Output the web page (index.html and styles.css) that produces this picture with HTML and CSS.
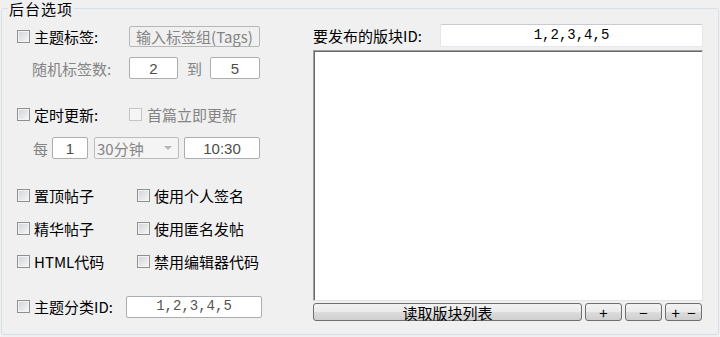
FILE: index.html
```html
<!DOCTYPE html>
<html lang="zh-CN">

<head>
  <meta charset="UTF-8">
  <title>后台选项</title>
  <link rel="stylesheet" href="styles.css">
</head>

<body>
  <fieldset class="group">
    <legend>后台选项</legend>
    <div class="cols">
      <div class="left">
        <div class="row r1">
          <label class="check lead"><span class="cb"></span>主题标签:</label>
          <div class="box off w-tags">输入标签组(Tags)</div>
        </div>
        <div class="row r2">
          <span class="lead muted indent">随机标签数:</span>
          <div class="box num w-small">2</div>
          <span class="muted to">到</span>
          <div class="box num w-small2">5</div>
        </div>

        <div class="row r3">
          <label class="check lead"><span class="cb"></span>定时更新:</label>
          <label class="check muted"><span class="cb off"></span>首篇立即更新</label>
        </div>
        <div class="row r4">
          <span class="muted every">每</span>
          <div class="box num w-one">1</div>
          <div class="select">30分钟<span class="arrow"></span></div>
          <div class="box num w-time">10:30</div>
        </div>

        <div class="opts">
          <label class="check"><span class="cb"></span>置顶帖子</label>
          <label class="check"><span class="cb"></span>使用个人签名</label>
          <label class="check"><span class="cb"></span>精华帖子</label>
          <label class="check"><span class="cb"></span>使用匿名发帖</label>
          <label class="check"><span class="cb"></span>HTML代码</label>
          <label class="check"><span class="cb"></span>禁用编辑器代码</label>
        </div>

        <div class="row r8">
          <label class="check"><span class="cb"></span>主题分类ID:</label>
          <div class="box ids w-cat">1,2,3,4,5</div>
        </div>
      </div>

      <div class="right">
        <div class="head">
          <span>要发布的版块ID:</span>
          <div class="field ids">1,2,3,4,5</div>
        </div>
        <div class="list"></div>
        <div class="buttons">
          <button class="btn wide">读取版块列表</button>
          <button class="btn">+</button>
          <button class="btn">−</button>
          <button class="btn pair">+ −</button>
        </div>
      </div>
    </div>
  </fieldset>
</body>

</html>
```

FILE: styles.css
```css
* {
  margin: 0;
  padding: 0;
  box-sizing: border-box;
}

body {
  width: 720px;
  height: 337px;
  overflow: hidden;
  background: #f0f0f0;
  font-family: "Noto Sans CJK SC", sans-serif;
  font-size: 15px;
  color: #000;
}

.group {
  margin: 0 1px;
  height: 335px;
  border: 1px solid #d5dfe5;
  border-radius: 3px;
  padding: 0 14px 14px 15px;
}

.group legend {
  margin-left: -9px;
  padding: 0 1px;
  font-size: 15px;
  line-height: 17px;
  letter-spacing: 1px;
  color: #000;
}

.cols {
  display: flex;
  gap: 51px;
  padding-top: 7px;
}

/* left column */
.left {
  width: 245px;
  padding-top: 1px;
}

.row {
  display: flex;
  align-items: center;
  height: 22px;
  line-height: 15px;
}

.r2 { margin-top: 10px; }
.r3 { margin-top: 24px; }
.r4 { margin-top: 12px; }
.r8 { margin-top: 23px; height: 23px; }

.lead {
  width: 112px;
  flex-shrink: 0;
}

.indent {
  padding-left: 15px;
}

.muted {
  color: #848484;
}

.check {
  display: flex;
  align-items: center;
  gap: 4px;
  line-height: 15px;
  white-space: nowrap;
}

.cb {
  width: 13px;
  height: 13px;
  flex-shrink: 0;
  border: 1px solid #8e8f8f;
  background: linear-gradient(135deg, #cfd2d6, #f8f8f8);
  box-shadow: inset 0 0 0 1px #f4f4f4;
}

.cb.off {
  border-color: #c5c5c5;
  background: #f5f5f5;
  box-shadow: none;
}

.box {
  height: 22px;
  border: 1px solid #abadb3;
  border-radius: 2px;
  background: #fff;
  display: flex;
  align-items: center;
  justify-content: center;
  white-space: nowrap;
}

.box.off {
  height: 21px;
  background: #f0f0f0;
  border-color: #b7b7b7;
  color: #848484;
}

.num {
  font-family: "Liberation Sans", sans-serif;
  color: #4d4d4d;
}

.ids {
  font-family: "Liberation Mono", monospace;
  font-size: 14px;
}

.w-tags { width: 131px; }
.w-small { width: 49px; }
.w-small2 { width: 50px; }
.to { margin: 0 8px 0 9px; }

.r3 .check.muted .cb { margin-right: 1px; }

.every {
  width: 35px;
  padding-left: 16px;
  flex-shrink: 0;
}

.w-one { width: 36px; }
.w-time { width: 76px; margin-left: 5px; }

.select {
  width: 85px;
  height: 22px;
  margin-left: 6px;
  padding-left: 2px;
  border: 1px solid #bcbcbc;
  border-radius: 2px;
  background: #f4f4f4;
  color: #848484;
  display: flex;
  align-items: center;
  justify-content: space-between;
}

.arrow {
  margin-right: 6px;
  border-left: 4px solid transparent;
  border-right: 4px solid transparent;
  border-top: 4px solid #b5b5b5;
}

.opts {
  display: grid;
  grid-template-columns: 120px auto;
  grid-auto-rows: 22px;
  row-gap: 11px;
  align-items: center;
  margin-top: 25px;
}

.w-cat {
  width: 136px;
  margin-left: auto;
  color: #555;
}

/* right column */
.right {
  width: 390px;
}

.head {
  display: flex;
  align-items: center;
  justify-content: space-between;
  height: 23px;
  line-height: 15px;
}

.field {
  width: 263px;
  height: 23px;
  border: 1px solid;
  border-color: #c9cbd0 #e3e6ea #e3e9ef #e3e6ea;
  border-radius: 2px;
  background: #fff;
  color: #000;
  display: flex;
  align-items: center;
  justify-content: center;
}

.list {
  height: 251px;
  margin-top: 3px;
  background: #fff;
  border: 1px solid;
  border-color: #a0a0a0 #e3e3e3 #e3e3e3 #a0a0a0;
  box-shadow: inset 1px 1px 0 #696969;
}

.buttons {
  display: flex;
  gap: 3px;
  margin-top: 2px;
}

.btn {
  width: 37px;
  height: 18px;
  border: 1px solid #707070;
  border-radius: 3px;
  background: linear-gradient(#f2f2f2 0%, #ebebeb 50%, #dddddd 50%, #cfcfcf 100%);
  font-family: "Noto Sans CJK SC", sans-serif;
  font-size: 15px;
  line-height: 15px;
  color: #000;
}

.btn.pair {
  word-spacing: 4px;
}

.btn.wide {
  width: 269px;
}
```
